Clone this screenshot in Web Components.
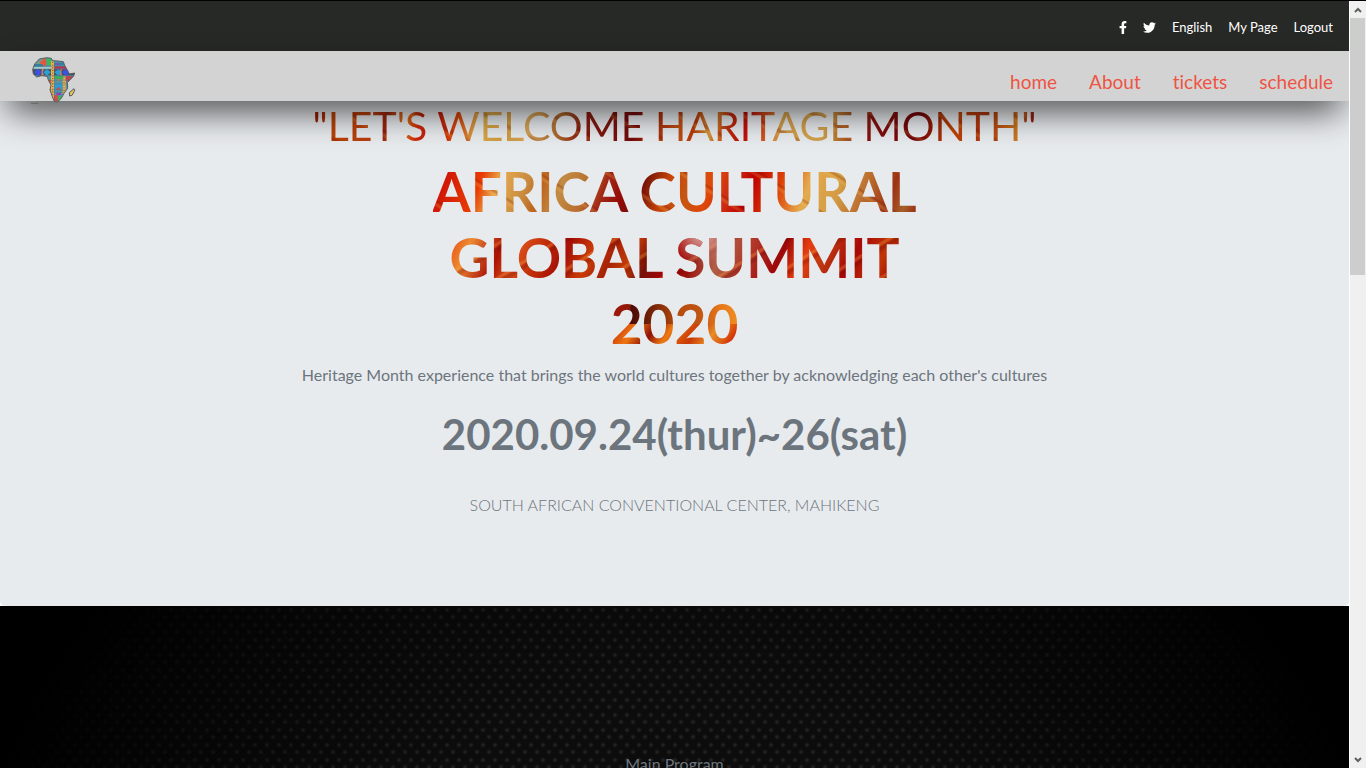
<!DOCTYPE html>
<html lang="en">
<head>
<meta charset="utf-8">
<title>Africa Cultural Global Summit 2020</title>
<style>
html, body { margin: 0; height: 100%; background: #fff; overflow: hidden; }
body { font-family: Lato, "Open Sans", sans-serif; font-size: 16px; color: #6c757d; font-variant-ligatures: none; }
</style>
</head>
<body>
<summit-page></summit-page>

<template id="t-page">
<style>
:host { display: grid; grid-template-columns: minmax(0, 1fr) 17px; height: 100vh; box-sizing: border-box; border-top: 1px solid #000; overflow: hidden; }
main { display: flex; flex-direction: column; min-height: 0; overflow: hidden; }
</style>
<main>
  <top-bar></top-bar>
  <site-nav>
    <nav-link href="#home">home</nav-link>
    <nav-link href="#about">About</nav-link>
    <nav-link href="#tickets">tickets</nav-link>
    <nav-link href="#schedule">schedule</nav-link>
  </site-nav>
  <hero-banner></hero-banner>
  <program-section>Main Program</program-section>
</main>
<scroll-track></scroll-track>
</template>

<template id="t-top">
<style>
:host { display: flex; flex: none; height: 50px; box-sizing: border-box; padding: 2px 16px 0 0; justify-content: flex-end; align-items: center; gap: 16px; background: #272926; font-size: 13px; line-height: 20px; }
a { color: #fff; text-decoration: none; display: block; }
svg { display: block; height: 13px; fill: #fff; }
</style>
<a href="#facebook" aria-label="Facebook"><svg viewBox="0 0 320 512" width="8"><path d="M279 288l14-93h-89v-60c0-25 12-50 52-50h41V7s-37-7-72-7c-73 0-121 44-121 125v70H23v93h81v224h100V288z"/></svg></a>
<a href="#twitter" aria-label="Twitter"><svg viewBox="0 0 512 512" width="13"><path d="M459 152c0 4 0 9 0 14 0 138-105 298-298 298-59 0-115-17-161-47 8 1 16 1 25 1 49 0 94-17 130-45-46-1-85-31-98-73 7 1 13 2 20 2 9 0 19-1 27-4-48-10-84-52-84-103v-1c14 8 30 13 47 13-28-19-46-51-46-87 0-19 5-37 14-53 52 64 129 105 216 110-2-8-3-16-3-24 0-58 47-105 105-105 30 0 57 13 77 33 23-5 46-13 66-25-8 25-24 45-46 58 21-2 42-8 60-16-14 21-31 39-51 54z"/></svg></a>
<a href="#language">English</a>
<a href="#my-page">My Page</a>
<a href="#logout">Logout</a>
</template>

<template id="t-nav">
<style>
:host { display: flex; flex: none; height: 50px; box-sizing: border-box; padding: 0 16px 0 28px; justify-content: space-between; background: #d3d3d3; position: relative; z-index: 2; box-shadow: 0 16px 36px -8px rgba(0,0,0,.8); }
nav { display: flex; gap: 32px; padding-top: 19px; }
</style>
<africa-logo></africa-logo>
<nav aria-label="Main"><slot></slot></nav>
</template>

<template id="t-link">
<style>
:host { display: block; }
a { display: block; font-size: 19px; line-height: 24px; color: #ef5343; text-decoration: none; }
</style>
<a><slot></slot></a>
</template>

<template id="t-logo">
<style>
:host { display: block; padding-top: 5px; }
svg { display: block; width: 48px; height: 50px; }
</style>
<svg viewBox="84 48 144 150" role="img" aria-label="Africa">
  <defs><clipPath id="land"><path id="shape" d="M98 88L104 72 118 57 140 53 154 55 158 62 174 63 190 65 194 76 203 92 208 102 224 99 221 108 202 128 203 145 192 160 184 175 172 186 163 184 157 170 150 150 153 135 145 120 142 109 125 107 110 111 100 102zM222 146L224 152 216 166 209 168 208 158z"/></clipPath></defs>
  <g clip-path="url(#land)">
    <path fill="#4b98ad" d="M90 48h140v142H90z"/>
    <path fill="#719d91" d="M108 55h30v18h-30z"/><path fill="#e95440" d="M119 68l17-16 4 20-8 9z"/><path fill="#3bb857" d="M140 50h13v25h-13z"/>
    <path fill="#327fa0" d="M100 72h28v8h-28zM163 68h28v8h-28z"/><path fill="#9ccbd0" d="M96 80h57v7H96z"/><path fill="#be3150" d="M164 79h34v7h-34z"/><path fill="#a63ab4" d="M172 67l6 8h-11z"/>
    <path fill="#474d69" d="M96 88h132v18H96z"/><path fill="#3b50e6" d="M103 97l11-10 11 10-11 11zM186 97l11-9 13 9-13 10z"/>
    <path fill="#29a0cf" d="M130 97l10-10 13 10-13 11zM163 97l12-9 11 9-11 10z"/><path fill="#cb8071" d="M125 87h8l-5 10 5 10h-9zM181 88h6l-4 9 4 9h-7z"/>
    <path fill="#e8b44a" d="M153 64h9v120h-9zM188 109h9v53h-9z"/><path stroke="#b44438" stroke-dasharray="3 5" fill="none" stroke-width="3" d="M158 66v118M192 110v50"/>
    <path fill="#3aac5e" d="M164 108h26v10h-26z"/><path fill="#b84759" d="M197 108h27l-18 21-9-8z"/><path fill="#2e9ad1" d="M164 132h23v17h-23z"/>
    <path fill="#cb5046" d="M168 150l7-10 8 10zM144 120h10v8h-10zM162 166h13v18h-13z"/><path fill="#9f39b0" d="M169 158h14v7h-14z"/><path fill="#3bb65b" d="M174 168h12v16h-12z"/><path fill="#cf784f" d="M170 118l6 7 7-7z"/><path fill="#e2c65a" d="M206 148h20v20h-20z"/>
    <path fill="none" stroke="#56646d" stroke-width="1" d="M96 79h102M96 87h110M102 107h120M146 121h65M150 131h55M153 150h45M155 157h38M163 60v125"/>
  </g>
  <use href="#shape" fill="none" stroke="#5b5c5e" stroke-width="3" stroke-linejoin="round"/>
  <path d="M93 190h22" stroke="#333" stroke-opacity=".55" stroke-width="2"/>
</svg>
</template>

<template id="t-hero">
<style>
:host { display: block; flex: none; height: 505px; box-sizing: border-box; background: #e8ebee; border-radius: 0 0 5px 5px; text-align: center; }
h1, h2, p { margin: 0; }
.lead { font-size: 41px; line-height: 48px; font-weight: 400; padding-top: 1px; }
h1 { font-size: 55px; line-height: 66px; font-weight: 700; padding-top: 8px; }
h1 span { display: block; width: max-content; margin: 0 auto; }
.lead span { display: inline-block; }
.paint { color: transparent; -webkit-background-clip: text; background-clip: text; }
.lead .paint { background-image:
  repeating-linear-gradient(28deg, transparent 0 13px, rgba(255,190,70,.16) 14px 16px, rgba(110,0,0,.2) 18px 20px, transparent 22px 31px),
  linear-gradient(100deg, #8e1208 0, #bb4308 22px, #b93e0d 62px, #99240e 75px, #dd7217 94px, #cd2908 108px, #bd1709 125px, #dc4e0b 148px, #d8aa4b 166px, #d09a3f 195px, #d2a357 217px, #a5602a 250px, #8a1c0e 270px, #730b0c 320px, #a72d0c 341px, #bf5015 365px, #b93a08 379px, #d09538 396px, #bc2e0c 413px, #c10d08 430px, #cc4d1c 448px, #d4a04b 466px, #d0a04b 508px, #b06527 528px, #86120e 553px, #730408 600px, #c04407 636px, #ad350d 665px, #cb781f 699px, #8b0b0d 714px); }
.one { background-image:
  repeating-linear-gradient(32deg, transparent 0 16px, rgba(255,202,99,.18) 17px 19px, rgba(120,20,0,.24) 21px 22px, transparent 23px 39px),
  linear-gradient(110deg, #c60007 0, #dc2c04 36px, #e93a00 52px, #e6aa4e 70px, #c98b40 97px, #bd641e 112px, #c28b43 130px, #b86c2d 156px, #a22c16 170px, #940a07 190px, #731006 206px, #c8450a 230px, #c55612 250px, #df4909 270px, #cc2d12 290px, #bd0002 308px, #dd3f05 335px, #e4aa4d 362px, #d29b44 393px, #b6652a 422px, #9d3115 443px, #a5602a 459px, #94170c 478px, #621008 494px); }
.two { background-image:
  radial-gradient(circle at 252px 10px, rgba(241,215,214,.8) 0, rgba(220,163,151,.5) 17px, transparent 33px),
  repeating-linear-gradient(148deg, transparent 0 11px, rgba(255,170,70,.28) 12px 14px, rgba(100,0,0,.25) 16px 18px, transparent 21px 29px),
  linear-gradient(115deg, #e93805 0, #ec8a33 26px, #aa1206 56px, #d84c18 75px, #bd2805 98px, #a60f07 117px, #c93b07 140px, #a72308 160px, #c33c09 177px, #751008 195px, #a60305 215px, #97120c 236px, #b05f46 258px, #b03025 288px, #9c0808 313px, #e63d0e 335px, #bd3811 353px, #a80707 380px, #bf3508 406px, #a40f06 422px, #ce4706 444px, #d8450e 455px); }
.three { background-image:
  linear-gradient(90deg, #a31907 0, #8d1707 19px, #4b0905 20px, #782607 43px, #b64b0e 67px, #bf5513 88px, #e77918 110px, #ef8c22 126px),
  linear-gradient(125deg, #bd2105 0, #ee7711 22px, #8f1006 38px, #ec7912 52px, #c93805 74px, #e78c29 89px, #df5b10 101px, #c20003 116px);
  background-size: 100% 34px, 100% 32px; background-position: 0 0, 0 34px; background-repeat: no-repeat; }
.about { line-height: 24px; padding-top: 7px; }
.date { font-size: 42px; line-height: 48px; font-weight: 700; padding-top: 23px; }
.venue { font-weight: 300; line-height: 24px; padding-top: 35px; }
</style>
<p class="lead"><span class="paint">"LET'S WELCOME HARITAGE MONTH"</span></p>
<h1><span class="paint one">AFRICA CULTURAL</span><span class="paint two">GLOBAL SUMMIT</span><span class="paint three">2020</span></h1>
<p class="about">Heritage Month experience that brings the world cultures together by acknowledging each other's cultures</p>
<p class="date">2020.09.24(thur)~26(sat)</p>
<p class="venue">SOUTH AFRICAN CONVENTIONAL CENTER, MAHIKENG</p>
</template>

<template id="t-program">
<style>
:host { display: block; flex: 1 0 162px; box-sizing: border-box; padding-top: 146px; text-align: center; line-height: 24px;
  background:
   radial-gradient(ellipse 52% 560px at 50% 320px, transparent 0, rgba(0,0,0,.1) 45%, rgba(0,0,0,.6) 78%, #000 100%),
   radial-gradient(circle at 3px 4px, #2b2b2b 0, transparent 3px) 0 0 / 12px 15px,
   radial-gradient(circle at 9px 11px, #2b2b2b 0, transparent 3px) 0 0 / 12px 15px,
   #0d0d0d; }
h2 { margin: 0; font-size: 16px; font-weight: 400; }
</style>
<h2><slot></slot></h2>
</template>

<template id="t-scroll">
<style>
:host { display: flex; flex-direction: column; background: #f0f0f0; border-left: 1px solid #fff; }
button { flex: none; display: grid; place-items: center; width: 100%; height: 17px; padding: 0; border: 0; background: none; }
.track { flex: 1; padding-right: 1px; }
.thumb { height: 35%; background: #cdcdcd; }
svg { width: 8px; height: 6px; display: block; fill: none; stroke: #606060; stroke-width: 2; }
</style>
<button aria-label="Scroll up"><svg viewBox="0 0 8 6"><path d="M1 5l3-3 3 3"/></svg></button>
<div class="track"><div class="thumb"></div></div>
<button aria-label="Scroll down"><svg viewBox="0 0 8 6"><path d="M1 1l3 3 3-3"/></svg></button>
</template>

<script>
class TemplateElement extends HTMLElement {
  constructor() {
    super();
    this.attachShadow({ mode: "open" }).append(
      document.getElementById(this.constructor.template).content.cloneNode(true));
  }
}
class TopBar extends TemplateElement { static template = "t-top"; }
class AfricaLogo extends TemplateElement { static template = "t-logo"; }
class SiteNav extends TemplateElement { static template = "t-nav"; }
class NavLink extends TemplateElement {
  static template = "t-link";
  connectedCallback() { this.shadowRoot.querySelector("a").href = this.getAttribute("href"); }
}
class HeroBanner extends TemplateElement { static template = "t-hero"; }
class ProgramSection extends TemplateElement { static template = "t-program"; }
class ScrollTrack extends TemplateElement { static template = "t-scroll"; }
class SummitPage extends TemplateElement { static template = "t-page"; }
customElements.define("top-bar", TopBar);
customElements.define("africa-logo", AfricaLogo);
customElements.define("site-nav", SiteNav);
customElements.define("nav-link", NavLink);
customElements.define("hero-banner", HeroBanner);
customElements.define("program-section", ProgramSection);
customElements.define("scroll-track", ScrollTrack);
customElements.define("summit-page", SummitPage);
</script>
</body>
</html>
